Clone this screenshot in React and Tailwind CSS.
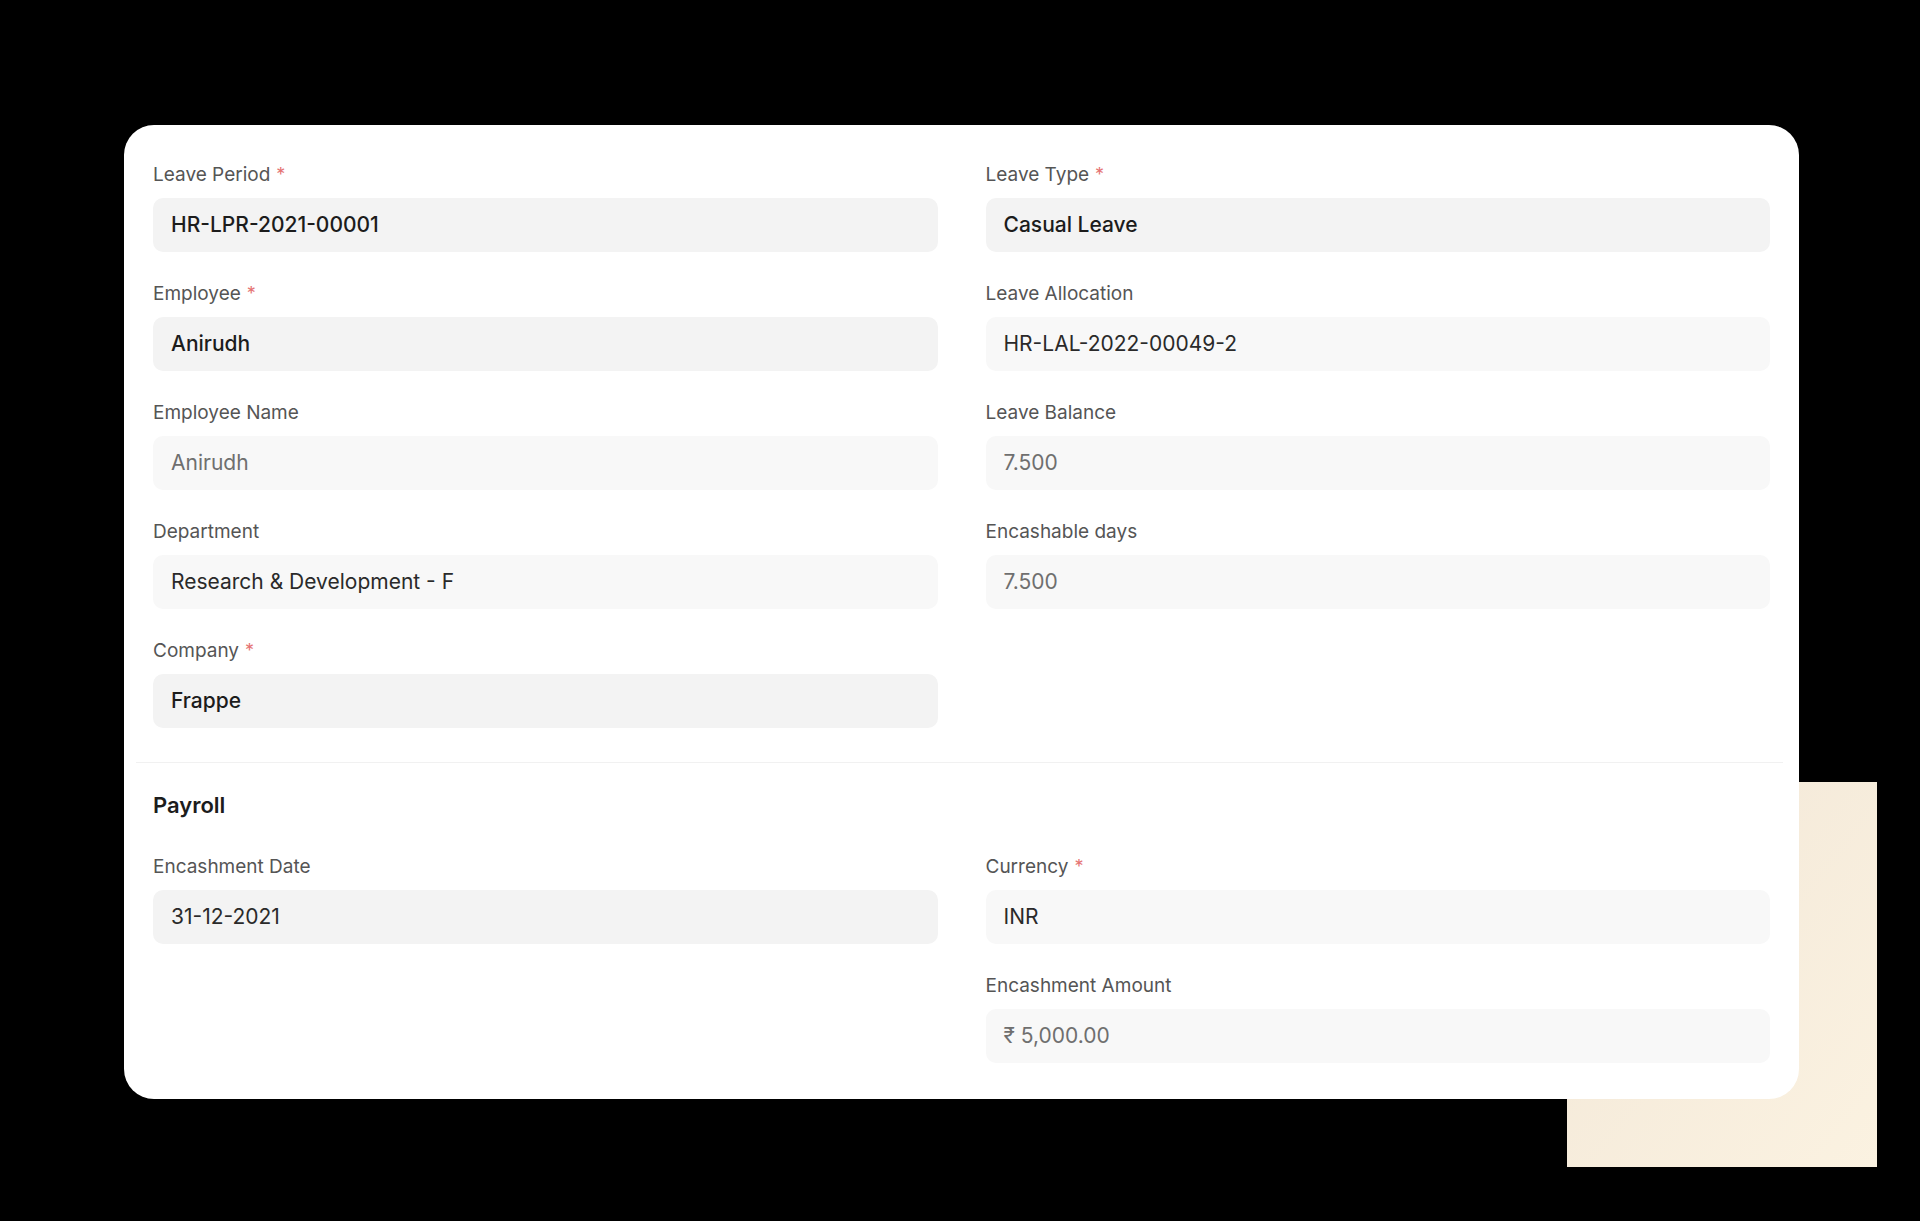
const section1 = [
  [
    { label: 'Leave Period', req: true, value: 'HR-LPR-2021-00001', kind: 'link' },
    { label: 'Employee', req: true, value: 'Anirudh', kind: 'link' },
    { label: 'Employee Name', value: 'Anirudh', kind: 'ro' },
    { label: 'Department', value: 'Research & Development - F', kind: 'plain' },
    { label: 'Company', req: true, value: 'Frappe', kind: 'link' },
  ],
  [
    { label: 'Leave Type', req: true, value: 'Casual Leave', kind: 'link' },
    { label: 'Leave Allocation', value: 'HR-LAL-2022-00049-2', kind: 'plain' },
    { label: 'Leave Balance', value: '7.500', kind: 'ro' },
    { label: 'Encashable days', value: '7.500', kind: 'ro' },
  ],
];

const section2 = [
  [{ label: 'Encashment Date', value: '31-12-2021', kind: 'date' }],
  [
    { label: 'Currency', req: true, value: 'INR', kind: 'plain' },
    { label: 'Encashment Amount', value: '₹ 5,000.00', kind: 'ro' },
  ],
];

function Field({ f }) {
  const box =
    f.kind === 'link' || f.kind === 'date'
      ? 'bg-[#f3f3f3]'
      : 'bg-[#f8f8f8]';
  const text =
    f.kind === 'link'
      ? 'text-[#1c1c1c] font-medium'
      : f.kind === 'ro'
      ? 'text-[#6f6f6f]'
      : 'text-[#2a2a2a]';
  return (
    <div className="flex flex-col">
      <div className="text-[19px] leading-[28px] text-[#555555] mb-[9px]">
        {f.label}
        {f.req && <span className="text-[#e57373] text-[18px] ml-[6px] align-top">*</span>}
      </div>
      <div className={`h-[54px] rounded-[10px] px-[18px] flex items-center ${box}`}>
        <span className={`text-[21px] ${text}`}>{f.value}</span>
      </div>
    </div>
  );
}

function Columns({ cols }) {
  return (
    <div className="grid grid-cols-2 gap-x-[48px]">
      {cols.map((col, i) => (
        <div key={i} className="flex flex-col gap-[28px]">
          {col.map(f => <Field key={f.label} f={f} />)}
        </div>
      ))}
    </div>
  );
}

export default function App() {
  return (
    <div className="relative w-[1920px] h-[1221px] bg-black overflow-hidden" style={{ fontFamily: 'Inter, "Noto Sans", sans-serif' }}>
      {/* beige backdrop */}
      <div className="absolute left-[1567px] top-[782px] w-[310px] h-[385px] bg-gradient-to-br from-[#f2e7d7] to-[#fbf2e1]" />

      <div className="relative z-10 ml-[124px] mt-[125px] w-[1675px] bg-white rounded-[30px]">
        <div className="px-[29px] pt-[36px] pb-[34px]">
          <Columns cols={section1} />
        </div>
        <div className="ml-[12px] mr-[16px] h-px bg-[#f1f1f1]" />
        <div className="px-[29px] pt-[27px] pb-[36px]">
          <div className="text-[22px] leading-[30px] font-semibold text-[#1c1c1c] mb-[33px]">Payroll</div>
          <Columns cols={section2} />
        </div>
      </div>
    </div>
  );
}
